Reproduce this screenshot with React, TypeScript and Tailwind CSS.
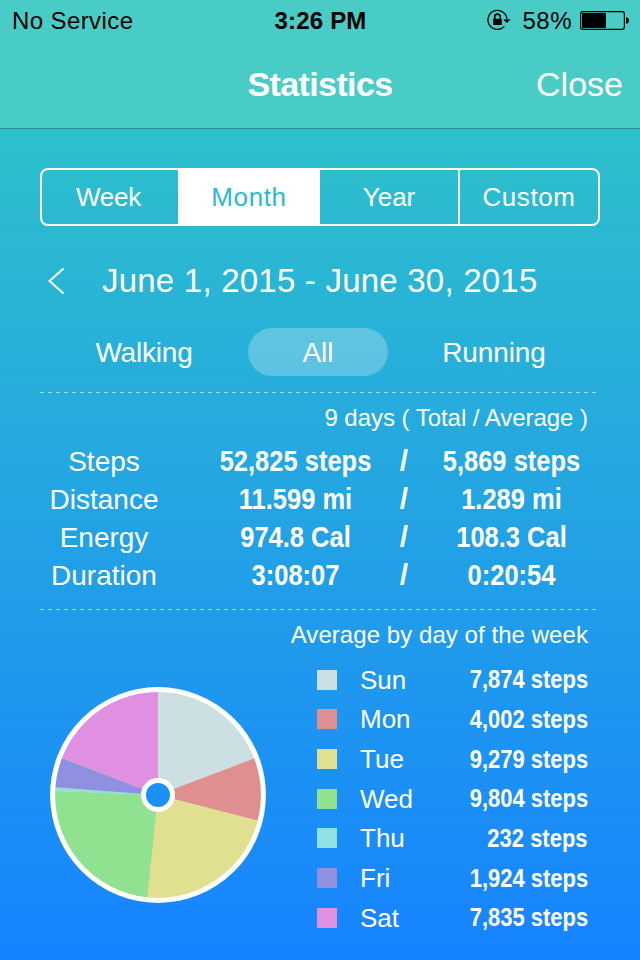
type DayData = { day: string; value: number; fill: string; swatch: string };

const DAYS: DayData[] = [
  { day: "Sun", value: 7874, fill: "fill-[#ccdfe2]", swatch: "bg-[#ccdfe2]" },
  { day: "Mon", value: 4002, fill: "fill-[#e08f90]", swatch: "bg-[#e08f90]" },
  { day: "Tue", value: 9279, fill: "fill-[#e0e090]", swatch: "bg-[#e0e090]" },
  { day: "Wed", value: 9804, fill: "fill-[#90e190]", swatch: "bg-[#90e190]" },
  { day: "Thu", value: 232, fill: "fill-[#90e1e1]", swatch: "bg-[#90e1e1]" },
  { day: "Fri", value: 1924, fill: "fill-[#9090e1]", swatch: "bg-[#9090e1]" },
  { day: "Sat", value: 7835, fill: "fill-[#e090e1]", swatch: "bg-[#e090e1]" },
];

const STATS = [
  { label: "Steps", total: "52,825 steps", average: "5,869 steps" },
  { label: "Distance", total: "11.599 mi", average: "1.289 mi" },
  { label: "Energy", total: "974.8 Cal", average: "108.3 Cal" },
  { label: "Duration", total: "3:08:07", average: "0:20:54" },
];

function StatusBar() {
  return (
    <div className="flex h-10 items-center justify-between pl-3 pr-[11px] text-2xl leading-[40px] text-black">
      <span className="w-[200px] pt-0.5 tracking-[0.4px]">No Service</span>
      <span className="w-[200px] pt-0.5 text-center font-bold tracking-[0.2px]">3:26 PM</span>
      <div className="flex w-[200px] items-center justify-end">
        <svg className="mr-[10px] h-6 w-[26px]" viewBox="0 0 26 24">
          <path d="M18.4 18.4A9.500 9.500 0 1 1 21 11.700" fill="none" stroke="black" strokeWidth="1.3" />
          <path d="M17.200 11.400h7.400l-3.700 3.600z" />
          <path d="M8.700 11.200V8.900a2.800 2.800 0 0 1 5.600 0v2.300" fill="none" stroke="black" strokeWidth="1.6" />
          <rect x="7.200" y="10.800" width="8.600" height="6.200" rx="0.5" />
        </svg>
        <span className="mr-[8px] pt-0.5 tracking-[0.5px]">58%</span>
        <svg className="h-[19px] w-[49px] shrink-0" viewBox="0 0 49 19">
          <rect x="0.6" y="0.6" width="43.8" height="17.8" rx="2.4" fill="none" stroke="black" strokeWidth="1.2" />
          <rect x="2" y="2" width="24" height="15" rx="1" />
          <path d="M46 6.2c1.8.3 3 1.600 3 3.300s-1.200 3-3 3.300z" />
        </svg>
      </div>
    </div>
  );
}

function Divider() {
  return (
    <div className="ml-10 h-px w-[556px] bg-[repeating-linear-gradient(90deg,rgba(255,255,255,0.6)_0_4px,transparent_4px_8px)]" />
  );
}

function PieChart({ data }: { data: DayData[] }) {
  const total = data.reduce((sum, item) => sum + item.value, 0);
  const point = (v: number) => {
    const a = (v / total) * Math.PI * 2;
    return `${108 + 104 * Math.sin(a)} ${108 - 104 * Math.cos(a)}`;
  };
  let sum = 0;

  return (
    <svg className="h-[216px] w-[216px]" viewBox="0 0 216 216">
      {/* light backing hides the seams between slices */}
      <circle cx="108" cy="108" r="104" fill="#d8dcc8" />
      {data.map((item) => {
        const start = sum;
        sum += item.value;
        return (
          <path key={item.day} className={item.fill} d={`M108 108L${point(start)}A104 104 0 0 1 ${point(sum)}Z`} />
        );
      })}
      <circle cx="108" cy="108" r="105.4" fill="none" stroke="white" strokeWidth="5" />
      <circle cx="108" cy="108" r="14.5" fill="#1c91f4" stroke="white" strokeWidth="5" />
    </svg>
  );
}

export default function App() {
  return (
    <div className="h-[960px] w-[640px] overflow-hidden bg-[linear-gradient(180deg,#2dc0cb_130px,#1784ff_950px)] font-['Liberation_Sans',Arial,sans-serif] text-white">
      <header className="h-[129px] border-b border-[#2b8c92] bg-[#4accc6]">
        <StatusBar />
        <div className="grid h-[88px] grid-cols-3 items-center px-[17px] text-[34px]">
          <h1 className="col-start-2 text-center font-bold tracking-[-0.6px]">Statistics</h1>
          <button className="text-right">Close</button>
        </div>
      </header>

      <div className="mx-10 mt-[39px] flex h-[58px] overflow-hidden rounded-lg border-2 border-white text-[26px] leading-[55px]">
        <button className="w-[136px] pr-[3px] tracking-[-0.3px]">Week</button>
        <button className="w-[142px] bg-white tracking-[0.6px] text-[#2dbad0]">Month</button>
        <button className="w-[140px] border-r-2 border-white">Year</button>
        <button className="flex-1 tracking-[0.6px]">Custom</button>
      </div>

      <div className="mt-7 flex h-[54px] items-center pl-12">
        <svg className="h-[28px] w-4" viewBox="0 0 16 28">
          <path d="M15.500 1.500L1.500 14L15.500 26.500" fill="none" stroke="white" strokeWidth="2" />
        </svg>
        <span className="ml-[38px] text-[33px] tracking-[0.22px]">June 1, 2015 - June 30, 2015</span>
      </div>

      <div className="mt-5 flex h-12 items-center pl-10 text-[28px] leading-[50px]">
        <button className="w-[208px] pt-0.5 tracking-[-0.2px]">Walking</button>
        <button className="h-12 w-[140px] rounded-full bg-white/25">All</button>
        <button className="w-[212px] pt-0.5 tracking-[-0.1px]">Running</button>
      </div>

      <div className="pt-4">
        <Divider />
      </div>

      <p className="mt-2 pr-[52px] text-right text-2xl leading-[34px] tracking-[-0.04px]">9 days ( Total / Average )</p>
      <div className="mt-1.5 pl-10">
        {STATS.map((row) => (
          <div key={row.label} className="grid h-[38px] grid-cols-[128px_36px_183px_34px_181px] items-center text-center">
            <span className="text-[28px]">{row.label}</span>
            <span className="col-start-3 scale-x-[0.85] pb-0.5 text-[30px] leading-9 font-bold whitespace-nowrap">{row.total}</span>
            <span className="pb-0.5 text-[30px] leading-9 font-bold">/</span>
            <span className="scale-x-[0.85] pb-0.5 text-[30px] leading-9 font-bold whitespace-nowrap">{row.average}</span>
          </div>
        ))}
      </div>

      <div className="pt-4">
        <Divider />
      </div>

      <p className="mt-2 pr-[52px] text-right text-2xl leading-[34px] tracking-[0.06px]">Average by day of the week</p>
      <div className="flex pl-[50px]">
        <div className="pt-[35px]">
          <PieChart data={DAYS} />
        </div>
        <div className="ml-[51px] mt-[8px]">
          {DAYS.map((item) => (
            <div key={item.day} className="flex h-[39.67px] w-[271px] items-center">
              <div className={`h-5 w-5 ${item.swatch}`} />
              <span className="ml-[23px] pt-px text-[26px]">{item.day}</span>
              <span className="ml-auto origin-right scale-x-[0.845] text-[26px] font-bold whitespace-nowrap">
                {item.value.toLocaleString("en-US")} steps
              </span>
            </div>
          ))}
        </div>
      </div>
    </div>
  );
}
